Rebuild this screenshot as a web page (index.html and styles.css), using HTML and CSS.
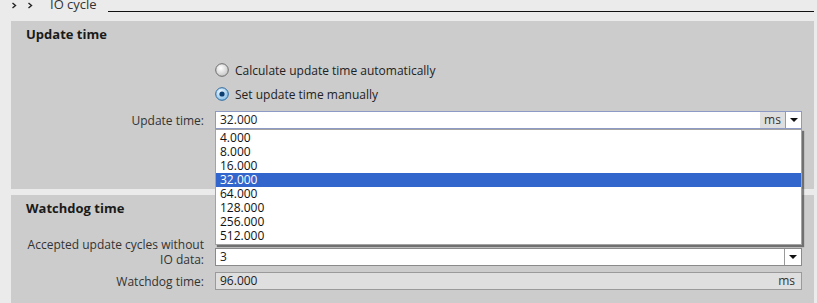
FILE: index.html
```html
<!DOCTYPE html>
<html lang="en">
<head>
    <meta charset="UTF-8">
    <title>IO cycle</title>
    <link rel="stylesheet" href="styles.css">
</head>
<body>

<div class="crumb">
    <span class="chev"><svg width="6" height="7" viewBox="0 0 6 7"><path d="M1.5 1 L4.5 3.5 L1.5 6" fill="none" stroke="#222" stroke-width="1.4"/></svg></span>
    <span class="chev"><svg width="6" height="7" viewBox="0 0 6 7"><path d="M1.5 1 L4.5 3.5 L1.5 6" fill="none" stroke="#222" stroke-width="1.4"/></svg></span>
    <span class="crumb-title">IO cycle</span>
    <span class="crumb-rule"></span>
</div>

<section class="panel panel-update">
    <h3>Update time</h3>
    <div class="options">
        <label class="radio">
            <svg width="14" height="14" viewBox="0 0 14 14">
                <defs>
                    <radialGradient id="off" cx="40%" cy="35%" r="70%">
                        <stop offset="0" stop-color="#ffffff"/>
                        <stop offset="1" stop-color="#c4c4c4"/>
                    </radialGradient>
                </defs>
                <circle cx="7" cy="7" r="6.3" fill="url(#off)" stroke="#6b6b6b" stroke-width="1"/>
            </svg>
            Calculate update time automatically
        </label>
        <label class="radio">
            <svg width="14" height="14" viewBox="0 0 14 14">
                <defs>
                    <radialGradient id="on" cx="40%" cy="35%" r="70%">
                        <stop offset="0" stop-color="#f2faff"/>
                        <stop offset="1" stop-color="#7fbbe6"/>
                    </radialGradient>
                </defs>
                <circle cx="7" cy="7" r="6.3" fill="url(#on)" stroke="#2a679e" stroke-width="1"/>
                <circle cx="7" cy="7" r="2.6" fill="#0c3e70"/>
            </svg>
            Set update time manually
        </label>
    </div>
    <div class="form-row">
        <span class="label">Update time:</span>
        <div class="field field-focus">
            <span class="value">32.000</span>
            <span class="unit">ms</span>
            <span class="drop drop-focus"><svg width="8" height="4" viewBox="0 0 8 4"><path d="M0 0 H8 L4 4 Z" fill="#111"/></svg></span>
            <ul class="dropdown">
                <li>4.000</li>
                <li>8.000</li>
                <li>16.000</li>
                <li class="selected">32.000</li>
                <li>64.000</li>
                <li>128.000</li>
                <li>256.000</li>
                <li>512.000</li>
            </ul>
        </div>
    </div>
</section>

<section class="panel panel-watchdog">
    <h3>Watchdog time</h3>
    <div class="form-grid">
        <span class="label label-end">Accepted update cycles without IO data:</span>
        <div class="field field-end">
            <span class="value">3</span>
            <span class="drop drop-box"><svg width="8" height="4" viewBox="0 0 8 4"><path d="M0 0 H8 L4 4 Z" fill="#111"/></svg></span>
        </div>
        <span class="label">Watchdog time:</span>
        <div class="field field-readonly">
            <span class="value">96.000</span>
            <span class="unit-plain">ms</span>
        </div>
    </div>
</section>

</body>
</html>
```

FILE: styles.css
```css
body {
    margin: 0;
    background: #ebebeb;
    font-family: "Open Sans", "Noto Sans", sans-serif;
    font-size: 12px;
    color: #222;
    overflow: hidden;
}
.crumb {
    display: flex;
    align-items: flex-start;
    height: 21px;
}
.chev {
    display: block;
    width: 6px;
    height: 7px;
    margin-top: 2px;
}
.chev svg {
    display: block;
}
.chev:first-child {
    margin-left: 11px;
}
.chev + .chev {
    margin-left: 10px;
}
.crumb-title {
    margin-left: 17px;
    margin-top: -3px;
    font-size: 13px;
    line-height: 15px;
    color: #333;
}
.crumb-rule {
    flex: 1;
    height: 11px;
    margin-left: 11px;
    margin-right: 3px;
    border-bottom: 1px solid #111;
}
.panel {
    background: #cccccc;
    margin-left: 11px;
    width: 803px;
    box-sizing: border-box;
    padding: 4px 15px 0 15px;
}
.panel-update {
    position: relative;
    z-index: 2;
    height: 168px;
}
.panel-watchdog {
    margin-top: 6px;
    height: 120px;
}
h3 {
    margin: 0;
    font-size: 13px;
    line-height: 18px;
    font-weight: bold;
    color: #1a1a1a;
}
.options {
    margin-top: 15px;
    margin-left: 189px;
}
.radio {
    display: flex;
    align-items: center;
    gap: 6px;
    height: 24px;
    color: #222;
}
.radio svg {
    display: block;
}
.form-row {
    display: grid;
    grid-template-columns: 178px 587px;
    column-gap: 11px;
    margin-top: 5px;
}
.form-grid {
    display: grid;
    grid-template-columns: 178px 587px;
    column-gap: 11px;
    row-gap: 6px;
    margin-top: 20px;
}
.label {
    text-align: right;
    align-self: center;
    line-height: 15px;
    color: #333;
}
.label-end {
    align-self: end;
    margin-bottom: -1px;
}
.field {
    position: relative;
    display: flex;
    height: 18px;
    box-sizing: border-box;
    background: #fff;
    border: 1px solid #8a8a8a;
    line-height: 16px;
}
.field-end {
    align-self: end;
}
.field-focus {
    border-color: #8d9ac3;
}
.field-readonly {
    background: #dfdfdf;
    border-color: #9a9a9a;
}
.value {
    flex: 1;
    padding-left: 4px;
}
.unit {
    width: 25px;
    text-align: center;
    background: #dedede;
    color: #333;
}
.unit-plain {
    padding-right: 6px;
    color: #333;
}
.drop {
    width: 15px;
    display: flex;
    align-items: center;
    justify-content: center;
}
.drop-focus {
    border-left: 1px solid #8d9ac3;
}
.drop-box {
    width: 16px;
    border-left: 1px solid #9a9a9a;
    background: #fff;
}
.dropdown {
    position: absolute;
    z-index: 3;
    left: -1px;
    top: calc(100% + 1px);
    width: calc(100% + 2px);
    box-sizing: border-box;
    margin: 0;
    padding: 1px 0;
    list-style: none;
    background: #fff;
    border: 1px solid #a3a3a3;
    box-shadow: 2px 2px 1px rgba(0, 0, 0, 0.45);
}
.dropdown li {
    height: 14px;
    line-height: 14px;
    padding-left: 4px;
    color: #111;
}
.dropdown li.selected {
    background: #3366cc;
    color: #fff;
}
```
